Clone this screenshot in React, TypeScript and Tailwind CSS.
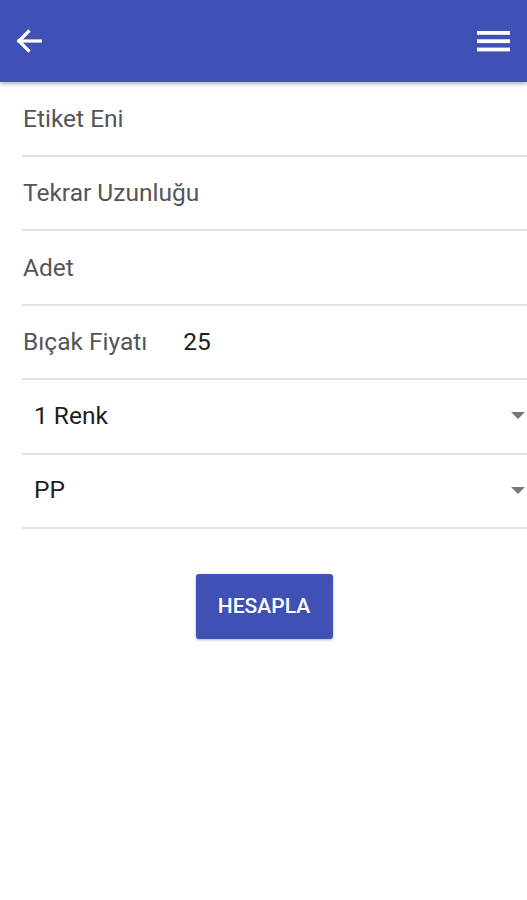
import React from "react";

const rows = [
  { label: "Etiket Eni" },
  { label: "Tekrar Uzunluğu" },
  { label: "Adet" },
  { label: "Bıçak Fiyatı", value: "25" },
];

const selects = ["1 Renk", "PP"];

const App = () => {
  return (
    <div className="min-h-[900px] w-full bg-white font-['Roboto',sans-serif]">
      {/* Toolbar */}
      <div className="relative z-10 flex h-[82px] items-center justify-between bg-[#3f51b5] px-[14px] shadow-[0_2px_4px_rgba(0,0,0,0.3)]">
        <svg width="30" height="30" viewBox="0 0 24 24" fill="none" stroke="white" strokeWidth="2.6" strokeLinecap="square">
          <path d="M21 12H4" />
          <path d="M11.5 4.5L4 12l7.5 7.5" />
        </svg>
        <svg width="33" height="26" viewBox="0 0 33 26" fill="white" className="mr-[3px]">
          <rect x="0" y="3" width="33" height="3.8" />
          <rect x="0" y="11.3" width="33" height="3.8" />
          <rect x="0" y="19.6" width="33" height="3.8" />
        </svg>
      </div>

      <div className="pl-[22px]">
        {rows.map((r) => (
          <div
            key={r.label}
            className="flex h-[74.5px] items-center border-b-2 border-[#e3e3e3] pt-[2px]"
          >
            <span className="pl-[1px] text-[24.5px] text-[#555555]">{r.label}</span>
            {r.value && (
              <span className="ml-[36px] text-[24.5px] text-[#222222]">{r.value}</span>
            )}
          </div>
        ))}
        {selects.map((s) => (
          <div
            key={s}
            className="flex h-[74.5px] items-center justify-between border-b-2 border-[#e3e3e3] pl-[12px] pr-[2px]"
          >
            <span className="text-[24.5px] text-[#1e1e1e]">{s}</span>
            <svg width="14" height="8" viewBox="0 0 14 8">
              <path d="M0 0h14L7 7z" fill="#777777" />
            </svg>
          </div>
        ))}
      </div>

      <div className="flex justify-center pt-[45px]">
        <button className="ml-[1px] h-[65px] w-[137px] rounded-[3px] bg-[#3f51b5] text-[21px] font-medium text-white shadow-[0_1px_3px_rgba(0,0,0,0.3)]">
          HESAPLA
        </button>
      </div>
    </div>
  );
};

export default App;
